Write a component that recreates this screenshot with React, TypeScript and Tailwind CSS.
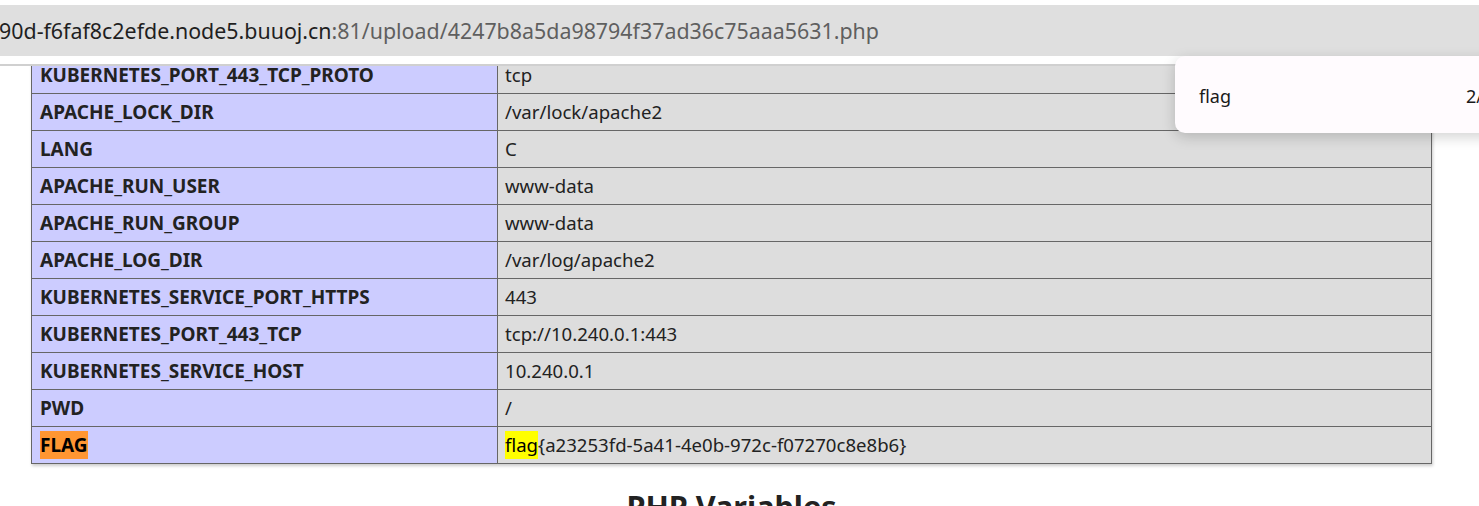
import React from "react";

const rows: [string, string][] = [
  ["KUBERNETES_PORT_443_TCP_PROTO", "tcp"],
  ["APACHE_LOCK_DIR", "/var/lock/apache2"],
  ["LANG", "C"],
  ["APACHE_RUN_USER", "www-data"],
  ["APACHE_RUN_GROUP", "www-data"],
  ["APACHE_LOG_DIR", "/var/log/apache2"],
  ["KUBERNETES_SERVICE_PORT_HTTPS", "443"],
  ["KUBERNETES_PORT_443_TCP", "tcp://10.240.0.1:443"],
  ["KUBERNETES_SERVICE_HOST", "10.240.0.1"],
  ["PWD", "/"],
];

export default function App() {
  return (
    <div
      className="relative w-[1479px] h-[506px] overflow-hidden bg-white text-[#222]"
      style={{ fontFamily: '"Noto Sans", "Open Sans", sans-serif' }}
    >
      <div className="h-[5px] bg-white" />
      <div className="h-[51px] bg-[#dfdfdf] flex items-center whitespace-nowrap text-[21.4px] leading-none">
        <span className="ml-[-1px] text-[#1f1f1f]">90d-f6faf8c2efde.node5.buuoj.cn</span>
        <span className="text-[#5f5f5f]">:81/upload/4247b8a5da98794f37ad36c75aaa5631.php</span>
      </div>
      <div className="h-[8px] bg-white" />
      <div className="h-[2px] bg-[#d0d0d0]" />
      <div className="overflow-hidden h-[440px]">
        <div className="-mt-[10px] ml-[31px] w-[1401px] border-x border-b border-[#666] shadow-[1px_2px_3px_#ccc] text-[18.6px]">
          {rows.map(([k, v]) => (
            <div key={k} className="flex h-[37px] border-t border-[#666]">
              <div className="w-[466px] shrink-0 bg-[#ccccff] border-r border-[#666] px-[8px] flex items-center font-bold text-[19px]">
                {k}
              </div>
              <div className="flex-1 bg-[#dddddd] pl-[7px] pr-[8px] flex items-center">{v}</div>
            </div>
          ))}
          <div className="flex h-[37px] border-t border-[#666]">
            <div className="w-[466px] shrink-0 bg-[#ccccff] border-r border-[#666] px-[8px] flex items-center font-bold text-[19px]">
              <span className="bg-[#ff9632] text-black">FLAG</span>
            </div>
            <div className="flex-1 bg-[#dddddd] pl-[7px] pr-[8px] flex items-center">
              <span className="bg-[#ffff00] text-black">flag</span>
              <span>{"{a23253fd-5a41-4e0b-972c-f07270c8e8b6}"}</span>
            </div>
          </div>
        </div>
        <h2 className="mt-[27px] ml-[31px] w-[1401px] text-center text-[30.6px] font-bold leading-none">
          PHP Variables
        </h2>
      </div>
      <div className="absolute left-[1175px] top-[56px] w-[340px] h-[77px] rounded-[10px] bg-[#fffbfe] shadow-[0_4px_14px_rgba(0,0,0,0.18)] flex items-center pt-[3px] text-[18px] text-[#1a1a1a] whitespace-nowrap">
        <span className="ml-[24px]">flag</span>
        <span className="ml-[235px]">2/2</span>
      </div>
    </div>
  );
}
